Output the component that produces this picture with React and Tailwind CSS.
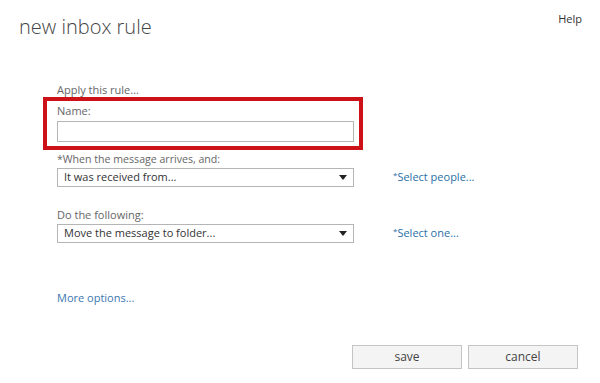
import React from 'react';

const Caret = () => (
  <svg width="8" height="5" viewBox="0 0 8 5" className="mr-[6px]">
    <path d="M0 0 L8 0 L4 5 Z" fill="#222" />
  </svg>
);

const DropRow = ({ label, value, link, narrow }) => (
  <div className="pl-[14px]">
    <div className={narrow ? 'text-[10.6px] leading-[14px] text-[#666]' : 'text-[11px] leading-[14px] text-[#666]'}>{label}</div>
    <div className="flex items-center mt-[2px]">
      <div className="w-[297px] h-[19px] border border-[#b5b5b5] bg-white flex items-center justify-between pl-[6px]">
        <span className="text-[11px] text-[#333]">{value}</span>
        <Caret />
      </div>
      <a className="ml-[39px] text-[11px] text-[#2a6fa8]">
        <span className="text-[8px] align-top">*</span>{link}
      </a>
    </div>
  </div>
);

const App = () => {
  return (
    <div className="w-[600px] h-[383px] bg-white flex flex-col" style={{ fontFamily: '"Open Sans", "Liberation Sans", sans-serif' }}>
      <div className="flex justify-between items-start">
        <h1 className="ml-[19px] mt-[13px] text-[20px] leading-[27px] font-light text-[#444]">new inbox rule</h1>
        <a className="mt-[11px] mr-[18px] text-[11px] text-[#333]">Help</a>
      </div>

      <div className="ml-[43px] mt-[43px]">
        <div className="pl-[14px] text-[11px] leading-[14px] text-[#666]">Apply this rule...</div>
        <div className="w-[320px] h-[53px] border-4 border-[#cc1119] pl-[10px] pt-[3px]">
          <div className="text-[11px] leading-[14px] text-[#666]">Name:</div>
          <input className="mt-[3px] w-[297px] h-[21px] border border-[#b5b5b5] outline-none" />
        </div>

        <div className="mt-[2px] flex flex-col gap-[21px]">
          <DropRow narrow label="*When the message arrives, and:" value="It was received from..." link="Select people..." />
          <DropRow label="Do the following:" value="Move the message to folder..." link="Select one..." />
        </div>

        <a className="block mt-[47px] pl-[14px] text-[11px] text-[#3b77b0]">More options...</a>
      </div>

      <div className="mt-auto mb-[14px] mr-[22px] flex justify-end gap-[6px]">
        <button className="w-[110px] h-[24px] border border-[#c4c4c4] bg-[#f4f4f4] text-[12px] text-[#444]">save</button>
        <button className="w-[110px] h-[24px] border border-[#c4c4c4] bg-[#f4f4f4] text-[12px] text-[#444]">cancel</button>
      </div>
    </div>
  );
};

export default App;
